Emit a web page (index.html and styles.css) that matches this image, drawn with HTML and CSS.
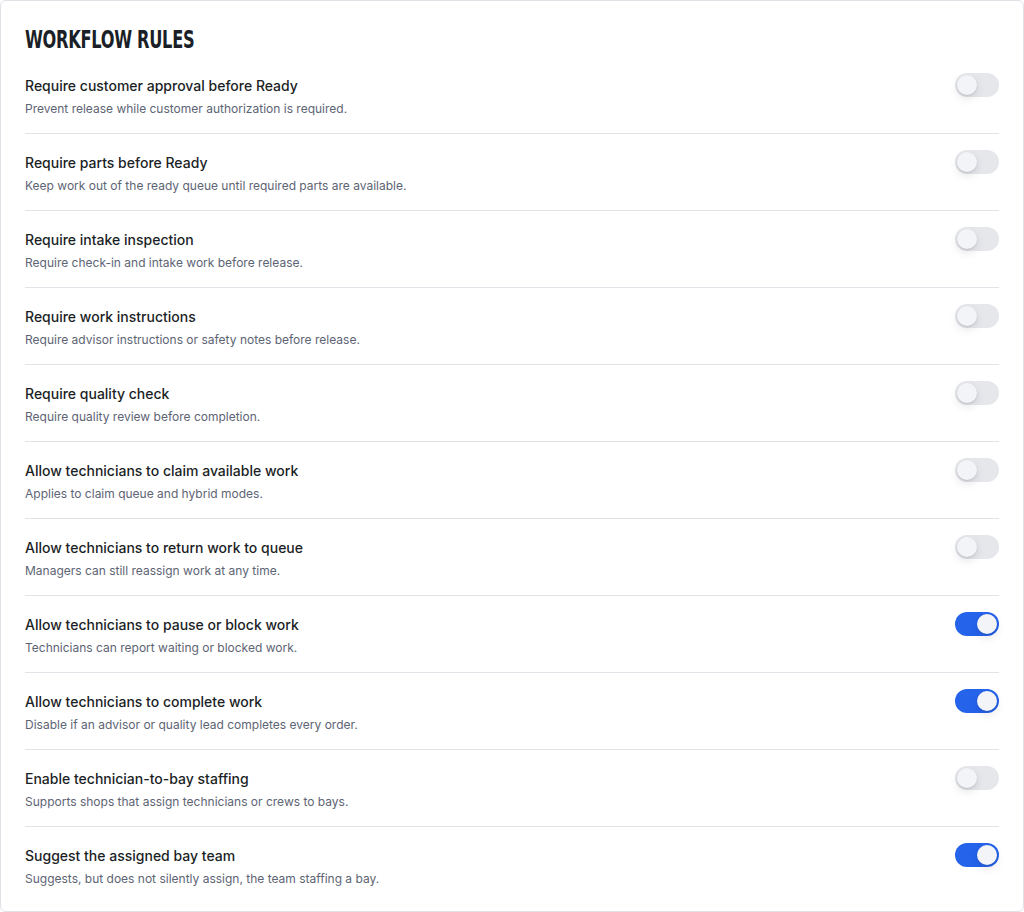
FILE: index.html
```html
<!DOCTYPE html>
<html lang="en">
<head>
<meta charset="utf-8">
<title>Workflow rules</title>
<link rel="stylesheet" href="styles.css">
</head>
<body>
<section class="card">
  <h2 class="card-title"><span class="card-title-text">WORKFLOW RULES</span></h2>
  <ul class="rules">
    <li class="rule">
      <div class="rule-text">
        <div class="rule-name">Require customer approval before Ready</div>
        <div class="rule-desc">Prevent release while customer authorization is required.</div>
      </div>
      <span class="switch" role="switch" aria-checked="false"><span class="knob"></span></span>
    </li>
    <li class="rule">
      <div class="rule-text">
        <div class="rule-name">Require parts before Ready</div>
        <div class="rule-desc">Keep work out of the ready queue until required parts are available.</div>
      </div>
      <span class="switch" role="switch" aria-checked="false"><span class="knob"></span></span>
    </li>
    <li class="rule">
      <div class="rule-text">
        <div class="rule-name">Require intake inspection</div>
        <div class="rule-desc">Require check-in and intake work before release.</div>
      </div>
      <span class="switch" role="switch" aria-checked="false"><span class="knob"></span></span>
    </li>
    <li class="rule">
      <div class="rule-text">
        <div class="rule-name">Require work instructions</div>
        <div class="rule-desc">Require advisor instructions or safety notes before release.</div>
      </div>
      <span class="switch" role="switch" aria-checked="false"><span class="knob"></span></span>
    </li>
    <li class="rule">
      <div class="rule-text">
        <div class="rule-name">Require quality check</div>
        <div class="rule-desc">Require quality review before completion.</div>
      </div>
      <span class="switch" role="switch" aria-checked="false"><span class="knob"></span></span>
    </li>
    <li class="rule">
      <div class="rule-text">
        <div class="rule-name">Allow technicians to claim available work</div>
        <div class="rule-desc">Applies to claim queue and hybrid modes.</div>
      </div>
      <span class="switch" role="switch" aria-checked="false"><span class="knob"></span></span>
    </li>
    <li class="rule">
      <div class="rule-text">
        <div class="rule-name">Allow technicians to return work to queue</div>
        <div class="rule-desc">Managers can still reassign work at any time.</div>
      </div>
      <span class="switch" role="switch" aria-checked="false"><span class="knob"></span></span>
    </li>
    <li class="rule">
      <div class="rule-text">
        <div class="rule-name">Allow technicians to pause or block work</div>
        <div class="rule-desc">Technicians can report waiting or blocked work.</div>
      </div>
      <span class="switch is-on" role="switch" aria-checked="true"><span class="knob"></span></span>
    </li>
    <li class="rule">
      <div class="rule-text">
        <div class="rule-name">Allow technicians to complete work</div>
        <div class="rule-desc">Disable if an advisor or quality lead completes every order.</div>
      </div>
      <span class="switch is-on" role="switch" aria-checked="true"><span class="knob"></span></span>
    </li>
    <li class="rule">
      <div class="rule-text">
        <div class="rule-name">Enable technician-to-bay staffing</div>
        <div class="rule-desc">Supports shops that assign technicians or crews to bays.</div>
      </div>
      <span class="switch" role="switch" aria-checked="false"><span class="knob"></span></span>
    </li>
    <li class="rule">
      <div class="rule-text">
        <div class="rule-name">Suggest the assigned bay team</div>
        <div class="rule-desc">Suggests, but does not silently assign, the team staffing a bay.</div>
      </div>
      <span class="switch is-on" role="switch" aria-checked="true"><span class="knob"></span></span>
    </li>
  </ul>
</section>
</body>
</html>
```

FILE: styles.css
```css
* { box-sizing: border-box; }

html, body {
  margin: 0;
  padding: 0;
  background: #ffffff;
}

body {
  font-family: Inter, "Noto Sans", "Liberation Sans", sans-serif;
  color: #1c1f26;
}

.card {
  width: 1024px;
  height: 912px;
  border: 1px solid #dfe1e6;
  border-radius: 6px;
  padding: 23px 24px 24px 24px;
  background: #ffffff;
}

/* Narrow display heading: condensed face squeezed further */
.card-title {
  margin: 0 0 8px 0;
  font-family: "DejaVu Sans Condensed", "DejaVu Sans", sans-serif;
  font-stretch: condensed;
  font-weight: 700;
  font-size: 25px;
  line-height: 32px;
  letter-spacing: -0.4px;
  color: #1b1f27;
}

.card-title-text {
  display: inline-block;
  transform: scaleX(0.72);
  transform-origin: left center;
}

.rules {
  list-style: none;
  margin: 0;
  padding: 0;
}

.rule {
  display: flex;
  align-items: flex-start;
  justify-content: space-between;
  gap: 24px;
  padding: 16px 0;
  border-bottom: 1px solid #e2e3e8;
}

.rule:first-child {
  padding-top: 9px;
}

.rule:last-child {
  border-bottom: none;
  padding-bottom: 0;
}

.rule-text {
  padding-top: 3px;
  display: flex;
  flex-direction: column;
  gap: 5px;
}

.rule-name {
  font-size: 14px;
  line-height: 20px;
  font-weight: 500;
  color: #1c1f26;
}

.rule-desc {
  font-size: 12px;
  line-height: 16px;
  color: #5d6474;
}

.switch {
  position: relative;
  flex: none;
  width: 44px;
  height: 24px;
  border-radius: 12px;
  background: #e6e7eb;
}

.switch .knob {
  position: absolute;
  top: 2px;
  left: 2px;
  width: 20px;
  height: 20px;
  border-radius: 50%;
  background: #f3f4f7;
  box-shadow: 0 4px 10px rgba(15, 23, 42, 0.10), 0 1px 2px rgba(15, 23, 42, 0.12);
}

.switch.is-on {
  background: #2563eb;
}

.switch.is-on .knob {
  left: 22px;
}
```
